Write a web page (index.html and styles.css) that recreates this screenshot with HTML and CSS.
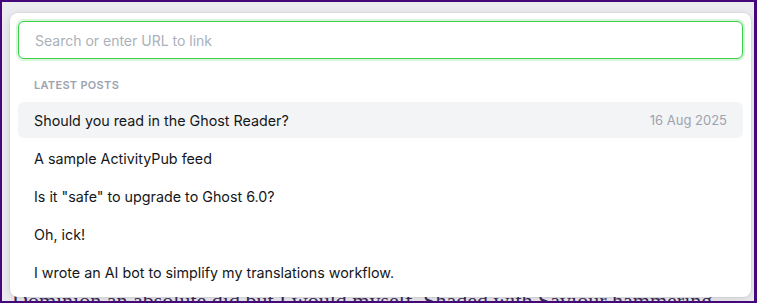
FILE: index.html
```html
<!DOCTYPE html>
<html lang="en">
<head>
    <meta charset="UTF-8">
    <title>Link search</title>
    <link rel="stylesheet" href="styles.css">
</head>
<body>
    <div class="frame">
        <!-- Page text behind the popover -->
        <div class="article">
            <p>Dominion an absolute did but I would myself. Shaded with Saviour hammering</p>
        </div>

        <!-- Link search popover -->
        <div class="popover">
            <div class="search">
                <input type="text" class="search-input" placeholder="Search or enter URL to link" autofocus>
            </div>
            <div class="section-title">Latest posts</div>
            <ul class="results">
                <li class="result selected">
                    <span class="result-title">Should you read in the Ghost Reader?</span>
                    <span class="result-date">16 Aug 2025</span>
                </li>
                <li class="result">
                    <span class="result-title">A sample ActivityPub feed</span>
                </li>
                <li class="result">
                    <span class="result-title">Is it "safe" to upgrade to Ghost 6.0?</span>
                </li>
                <li class="result">
                    <span class="result-title">Oh, ick!</span>
                </li>
                <li class="result">
                    <span class="result-title">I wrote an AI bot to simplify my translations workflow.</span>
                </li>
            </ul>
        </div>
    </div>
</body>
</html>
```

FILE: styles.css
```css
/* Editor frame with link popover */
html, body {
    margin: 0;
    height: 100%;
}
body {
    font-family: Inter, "Noto Sans", sans-serif;
    background: #ffffff;
}
.frame {
    position: relative;
    box-sizing: border-box;
    height: 303px;
    border: 2px solid #45087a;
    border-right-width: 3px;
    background: #ecebef;
    overflow: hidden;
}
.article {
    padding: 285px 0 0 10px;
}
.article p {
    margin: 0;
    font-family: "Liberation Serif", serif;
    font-size: 22px;
    line-height: 28px;
    color: #3b2a5a;
    white-space: nowrap;
}
.popover {
    position: absolute;
    left: 8px;
    top: 11px;
    width: 741px;
    height: 284px;
    box-sizing: border-box;
    padding: 8px 8px;
    background: #ffffff;
    border-radius: 8px;
    box-shadow: 0 0 0 1px rgba(0, 0, 0, 0.03), 0 2px 10px rgba(0, 0, 0, 0.12);
}
.search-input {
    display: block;
    box-sizing: border-box;
    width: 100%;
    height: 38px;
    padding: 0 16px;
    border: 1px solid #3ccf4a;
    border-radius: 6px;
    box-shadow: 0 0 0 2px rgba(60, 207, 74, 0.2);
    font-family: inherit;
    font-size: 14px;
    color: #15171a;
    outline: none;
    caret-color: #15171a;
}
.search-input::placeholder {
    color: #aab1bb;
}
.section-title {
    padding: 19px 16px 10px;
    font-size: 11px;
    font-weight: 600;
    letter-spacing: 0.3px;
    text-transform: uppercase;
    color: #9ca3af;
}
.results {
    list-style: none;
    margin: 0;
    padding: 0;
    display: flex;
    flex-direction: column;
    gap: 2px;
}
.result {
    display: flex;
    align-items: center;
    justify-content: space-between;
    height: 36px;
    padding: 0 16px;
    border-radius: 6px;
    font-size: 14.3px;
    color: #15171a;
}
.result.selected {
    background: #f3f4f6;
}
.result-date {
    font-size: 13px;
    color: #9ca3af;
}
```
